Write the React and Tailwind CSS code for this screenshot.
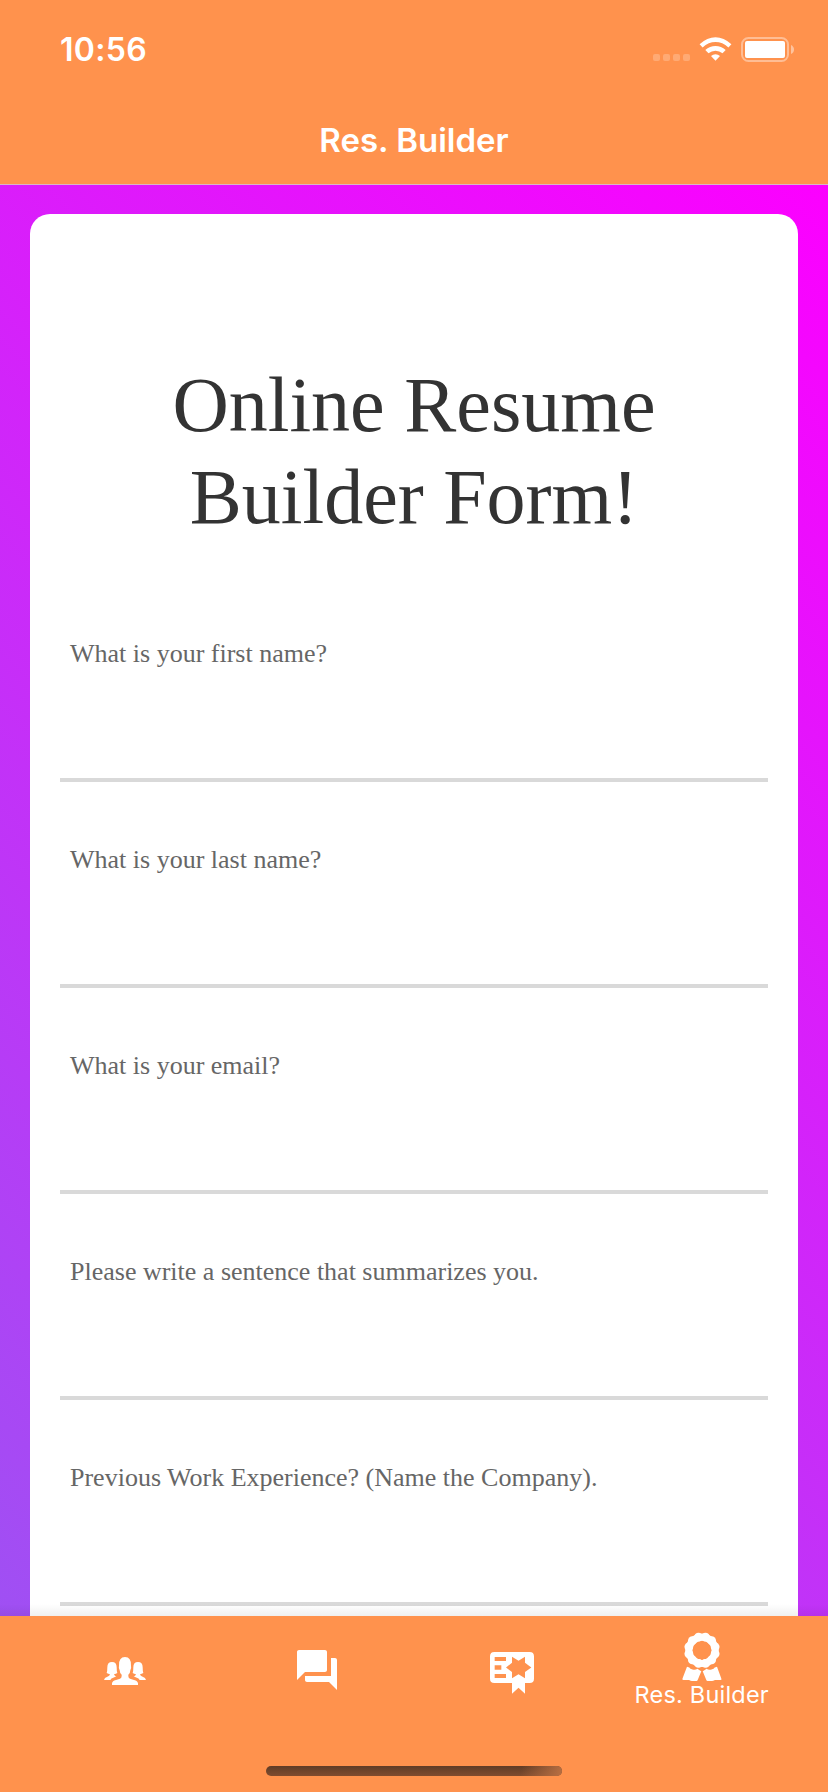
import React from "react";

const QUESTIONS = [
  "What is your first name?",
  "What is your last name?",
  "What is your email?",
  "Please write a sentence that summarizes you.",
  "Previous Work Experience? (Name the Company).",
];

const SCALLOPS = Array.from({ length: 12 }, (_, i) => {
  const a = (i * Math.PI) / 6 + Math.PI / 12;
  return [20 + 13.6 * Math.cos(a), 18.3 + 13.6 * Math.sin(a)];
});

function StatusIcons() {
  return (
    <svg width="142" height="26" viewBox="0 0 142 26" fill="#fff">
      <g opacity="0.22">
        <rect x="0" y="17" width="7" height="7" rx="2" />
        <rect x="10" y="17" width="7" height="7" rx="2" />
        <rect x="20" y="17" width="7" height="7" rx="2" />
        <rect x="30" y="17" width="7" height="7" rx="2" />
      </g>
      <path d="M46.6 7.3 Q54.2 .3 62.5 .3 Q70.800 .3 78.400 7.300 L75.400 10.500 Q69.500 5.100 62.500 5.100 Q55.500 5.100 49.600 10.500Z" />
      <path d="M52.300 12.900 Q56.800 9 62.500 9 Q68.200 9 72.700 12.900 L69.500 16.200 Q66.500 13.700 62.500 13.700 Q58.500 13.700 55.500 16.200Z" />
      <path d="M58 19 Q60 17.200 62.500 17.200 Q65 17.200 67 19 L62.500 23.800Z" />
      <rect x="89" y="1" width="46" height="23" rx="6.500" fill="none" stroke="#fff" strokeOpacity="0.4" strokeWidth="2" />
      <rect x="92" y="4" width="40" height="17" rx="2" />
      <path d="M138 8 Q141 9.500 141 12.500 Q141 15.500 138 17Z" opacity="0.45" />
    </svg>
  );
}

function PeopleIcon() {
  return (
    <svg width="42" height="28" viewBox="42 81 126 84" fill="#fff">
      <path d="M66 165v-5q1-7 12-10l12-4q5-2 5-8v-4q-6-5-6-13-4-6-2-14-1-26 18-26t18 26q2 8-2 14 0 8-6 13v4q0 6 5 8l12 4q11 3 12 10v5Z" />
      <path d="M42 150q1-7 10-10 7-2 8-7-5-1-10-4 2-5 2-17 0-16 14-16t14 16q0 12 2 17-4 3-10 4 1 4 4 5l3 1-6 3q-11 4-12 8Z" />
      <path d="M168 150q-1-7-10-10-7-2-8-7 5-1 10-4-2-5-2-17 0-16-14-16t-14 16q0 12-2 17 4 3 10 4-1 4-4 5l-3 1 6 3q11 4 12 8Z" />
    </svg>
  );
}

function ChatIcon() {
  return (
    <svg width="48" height="48" viewBox="0 0 24 24" fill="#fff">
      <path d="M21 6h-2v9H6v2c0 .55.45 1 1 1h11l4 4V7c0-.55-.45-1-1-1zm-4 6V3c0-.55-.45-1-1-1H3c-.55 0-1 .45-1 1v14l4-4h10c.55 0 1-.45 1-1z" />
    </svg>
  );
}

function CertificateIcon() {
  return (
    <svg width="44" height="42" viewBox="57 96 132 126" fill="#fff">
      <path
        fillRule="evenodd"
        d="M70 96H176Q189 96 189 109V176Q189 189 176 189H162V221L142.500 203 123 221V189H70Q57 189 57 176V109Q57 96 70 96Z M71 111V123H105V111Z M71 136V149H91V136Z M71 162V174H105V162Z M123 110V128L105 142.500 123 156V175L142.500 163 162 175V156L181 142.500 162 128V110L142.500 122Z"
      />
    </svg>
  );
}

function AwardIcon() {
  return (
    <svg width="40" height="50" viewBox="0 0 40 50" fill="#fff">
      <circle cx="20" cy="18.300" r="13.200" fill="none" stroke="#fff" strokeWidth="7.200" />
      {SCALLOPS.map(([x, y], i) => (
        <circle key={i} cx={x} cy={y} r="4.400" />
      ))}
      <path d="M5 34.700 .500 46.500Q0 48 1.500 48H7Q9 49 10 49H14.500Q15.300 49 15.700 48L19.300 39.300Q17 38 15.500 36.800 13 38.500 10.500 37.500 8 37 7.300 35.500Z" />
      <path d="M35 34.700 39.300 46.500Q40 48 38.500 48H33Q31 49 30 49H25.500Q24.700 49 24.300 48L20.700 39.300Q23 38 24.500 36.800 27 38.500 29.500 37.500 32 37 32.700 35.500Z" />
    </svg>
  );
}

export default function App() {
  return (
    <div className="flex h-[1792px] w-[828px] flex-col overflow-hidden bg-[#ff924d] font-['Inter',sans-serif] text-white">
      <header className="flex h-[185px] shrink-0 flex-col border-b border-[#d9b5c4]">
        <div className="flex h-[100px] items-start justify-between pr-[33px] pl-[60px]">
          <span className="mt-[30px] text-[32px] leading-10 font-semibold tracking-[0.3px]">10:56</span>
          <div className="mt-[37px]">
            <StatusIcons />
          </div>
        </div>
        <h1 className="mt-5 text-center text-[33px] leading-10 font-semibold">Res. Builder</h1>
      </header>

      <main className="relative min-h-0 flex-1 overflow-hidden bg-[linear-gradient(45deg,#9f50f3,#fc00ff)] px-[30px] pt-[29px]">
        <div className="h-[1500px] rounded-[20px] bg-white px-[30px] pt-[145px] font-['Liberation_Serif',serif]">
          <h2 className="text-center text-[78px] leading-[92px] text-[#333]">
            Online Resume
            <br />
            Builder Form!
          </h2>
          <form className="mt-[33px]">
            {QUESTIONS.map((question) => (
              <label
                key={question}
                className="block h-[206px] border-b-4 border-[#d9d9d9] pt-[58px] pl-[10px] text-[26px] leading-[40px] text-[#666]"
              >
                {question}
              </label>
            ))}
          </form>
        </div>
        <div className="absolute inset-x-0 bottom-0 h-3 bg-linear-to-t from-black/6 to-transparent" />
      </main>

      <footer className="flex h-[176px] shrink-0 flex-col items-center">
        <nav className="grid h-[120px] w-[770px] grid-cols-4">
          <div className="flex justify-center pt-[41px]">
            <PeopleIcon />
          </div>
          <div className="flex justify-center pt-[30px] pr-[2px]">
            <ChatIcon />
          </div>
          <div className="flex justify-center pt-[36px] pl-[3px]">
            <CertificateIcon />
          </div>
          <div className="flex flex-col items-center pt-[16px] pr-[2px]">
            <AwardIcon />
            <span className="-mt-[3px] text-[23.5px] leading-8 tracking-[0.2px] whitespace-nowrap">Res. Builder</span>
          </div>
        </nav>
        <div className="mt-[30px] h-[10px] w-[296px] overflow-hidden rounded-full bg-linear-to-b from-[#603c26] to-[#7f4c2f]">
          <div className="h-full w-full bg-[linear-gradient(100deg,transparent_86%,#b96f42)]" />
        </div>
      </footer>
    </div>
  );
}
